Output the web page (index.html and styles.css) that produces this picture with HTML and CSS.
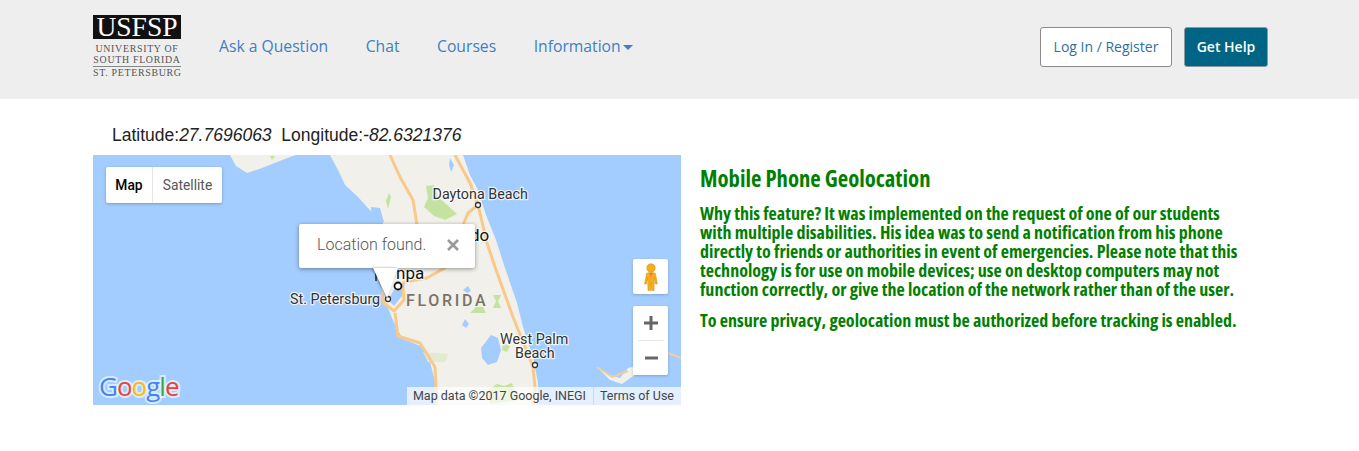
FILE: index.html
```html
<!DOCTYPE html>
<html lang="en">
<head>
  <title>Mobile Phone Geolocation</title>
  <meta charset="utf-8" />
  <link rel="stylesheet" href="styles.css">
</head>
<body>
  <header class="topbar">
    <a class="logo" href="#">
      <span class="logo-mark">USFSP</span>
      <span class="logo-line">UNIVERSITY OF</span>
      <span class="logo-line logo-rule">SOUTH FLORIDA</span>
      <span class="logo-line">ST. PETERSBURG</span>
    </a>
    <nav class="nav">
      <a href="#">Ask a Question</a>
      <a href="#">Chat</a>
      <a href="#">Courses</a>
      <a href="#">Information<span class="caret"></span></a>
    </nav>
    <div class="actions">
      <a class="btn btn-login" href="#">Log In / Register</a>
      <a class="btn btn-help" href="#">Get Help</a>
    </div>
  </header>

  <main class="content">
    <div class="geo-col">
      <div class="coords">Latitude:<em>27.7696063</em>&nbsp; Longitude:<em>-82.6321376</em></div>
      <div class="map">
        <svg class="map-art" viewBox="93 155 588 250" width="588" height="250">
          <!-- land -->
          <path class="land" d="M230 155 L236 166 L247 173 L262 168 L272 164 L290 157 L296 155 Z" />
          <path class="land" d="M330 155 L338 170 L345 185 L358 197 L368 208 L383 223 L384 262 L380 280 L383 297 L387 305 L392 318 L396 327 L403 339 L423 347 L430 362 L436 385 L437 405 L537 405 L538 383 L533 357 L523 327 L517 303 L505 268 L496 240 L486 215 L478 190 L470 175 L463 155 Z" />
          <path class="land" d="M597 367 L610 375 L620 378 L628 368 L636 366 L636 374 L622 384 L610 380 Z" />
          <!-- tampa bay and lakes -->
          <path class="water" d="M388 300 L396 286 L405 283 L402 296 L394 306 Z" />
          <path class="water" d="M371 207 L380 208 L384 222 L372 226 Z" />
          <path class="water" d="M491 335 L498 338 L501 350 L497 362 L488 365 L482 358 L481 348 Z" />
          <path class="water" d="M465 319 L469 324 L466 328 L462 325 Z" />
          <path class="water" d="M463 290 L468 286 L471 291 L467 293 Z" />
          <path class="water" d="M450 158 L454 165 L451 172 L449 165 Z" />
          <path class="water" d="M431 194 L438 199 L434 205 L430 200 Z" />
          <path class="water" d="M505 238 L512 252 L516 268 L508 256 Z" />
          <!-- parks -->
          <path class="park" d="M426 186 L434 185 L438 197 L446 204 L457 214 L445 220 L434 216 L424 207 L428 198 Z" />
          <path class="park" d="M476 307 L483 307 L486 313 L470 313 Z" />
          <path class="park" d="M493 295 L501 295 L498 301 L501 308 L493 308 L496 301 Z" />
          <path class="park" d="M488 390 L497 384 L504 386 L512 383 L518 400 L490 404 Z" />
          <path class="park" d="M503 343 L510 346 L507 352 L502 350 Z" />
          <path class="park-pale" d="M423 352 L448 354 L446 362 L428 362 Z" />
          <path class="park" d="M389 193 L391 197 L388 209 L386 201 Z" />
          <path class="park" d="M275 156 L272 160 L270 156 Z" />
          <!-- roads -->
          <path class="road" d="M390 155 L400 177 L413 200 L417 225 L420 250" />
          <path class="road" d="M455 155 L470 183 L478 205 L487 243 L495 267 L513 317 L533 367 L535 387 L533 405" />
          <path class="road" d="M478 205 L468 213 L463 225 L450 265 L427 278 L405 282 L396 290" />
          <path class="road" d="M403 287 L404 300 L394 311 L384 303 L382 294" />
          <path class="road" d="M395 313 L398 336 L420 343 L435 367 L437 405" />
          <path class="road-thin" d="M597 367 L612 377 L628 371" />
          <path class="road-thin" d="M668 353 L681 358" />
          <!-- city dots -->
          <circle class="city" cx="478" cy="205" r="2.5" />
          <circle class="city city-big" cx="398" cy="286" r="3.5" />
          <circle class="city" cx="388" cy="299" r="2.5" />
          <circle class="city" cx="535" cy="365" r="2.5" />
          <!-- labels -->
          <text class="label" x="432.5" y="199">Daytona Beach</text>
          <text class="label label-big" x="470" y="241">do</text>
          <text class="label label-big" x="396" y="279">npa</text>
          <path class="label-stub" d="M376 269 V281" />
          <text class="label" x="290" y="304">St. Petersburg</text>
          <text class="label-state" x="406" y="306">FLORIDA</text>
          <text class="label" x="500" y="344">West Palm</text>
          <text class="label" x="515" y="358">Beach</text>
          <text class="google" x="99" y="396"><tspan class="g-blue">G</tspan><tspan class="g-red">o</tspan><tspan class="g-yellow">o</tspan><tspan class="g-blue">g</tspan><tspan class="g-green">l</tspan><tspan class="g-red">e</tspan></text>
        </svg>

        <div class="map-type">
          <span class="map-type-on">Map</span>
          <span class="map-type-off">Satellite</span>
        </div>

        <div class="popup">
          <span class="popup-text">Location found.</span>
          <svg class="popup-close" viewBox="0 0 14 14" width="14" height="14"><path d="M2 2 L12 12 M12 2 L2 12" /></svg>
        </div>
        <div class="popup-tail"></div>

        <div class="pegman">
          <svg viewBox="0 0 16 28" width="16" height="28">
            <circle cx="8" cy="5" r="4.2" fill="#f9ad1d" stroke="#d08f16" stroke-width=".6" />
            <path d="M3.6 10.2 Q8 8.6 12.4 10.2 L14.4 21 L12.6 21 L11.4 14.5 L11 27.5 L8.5 27.5 L8 19.5 L7.5 27.5 L5 27.5 L4.6 14.5 L3.4 21 L1.6 21 Z" fill="#f9ad1d" stroke="#d08f16" stroke-width=".5" />
            <path d="M6 10 L8 13.5 L10 10 Z" fill="#ee7f1f" />
          </svg>
        </div>

        <div class="zoom-box">
          <span class="zoom-btn"><svg viewBox="0 0 14 14" width="14" height="14"><path d="M5.5 0 H8.5 V5.5 H14 V8.5 H8.5 V14 H5.5 V8.5 H0 V5.5 H5.5 Z" /></svg></span>
          <span class="zoom-line"></span>
          <span class="zoom-btn"><svg viewBox="0 0 14 14" width="14" height="14"><path d="M1 5.5 H14 V8.5 H1 Z" /></svg></span>
        </div>

        <div class="map-foot">
          <span>Map data ©2017 Google, INEGI</span>
          <span>Terms of Use</span>
        </div>
      </div>
    </div>

    <section class="about">
      <h2 class="about-title">Mobile Phone Geolocation</h2>
      <p>Why this feature? It was implemented on the request of one of our students with multiple disabilities. His idea was to send a notification from his phone directly to friends or authorities in event of emergencies. Please note that this technology is for use on mobile devices; use on desktop computers may not function correctly, or give the location of the network rather than of the user.</p>
      <p>To ensure privacy, geolocation must be authorized before tracking is enabled.</p>
    </section>
  </main>
</body>
</html>
```

FILE: styles.css
```css
body{
  margin: 0;
  background-color: white;
  font-family: "Open Sans", "Liberation Sans", sans-serif;
}
a{
  text-decoration: none;
}

/* top bar */
.topbar{
  display: flex;
  align-items: center;
  height: 99px;
  padding: 0 91px 6px 93px;
  box-sizing: border-box;
  background-color: #eeeeee;
}
.logo{
  display: flex;
  flex-direction: column;
  width: 88px;
  color: #555;
  font-family: "Liberation Serif", serif;
  font-size: 9.9px;
  line-height: 11.5px;
  white-space: nowrap;
}
.logo-mark{
  height: 24px;
  margin-bottom: 4px;
  background-color: #111;
  color: white;
  font-size: 27.5px;
  line-height: 24px;
  text-align: center;
}
.logo-line{
  letter-spacing: .7px;
  text-align: center;
}
.logo-rule{
  border-bottom: 1px solid #888;
}
.nav{
  display: flex;
  gap: 37.5px;
  margin: -2px 0 0 38px;
  font-size: 15.7px;
}
.nav a{
  color: #3f7fc4;
}
.caret{
  display: inline-block;
  margin-left: 2px;
  border-top: 5px solid #3f7fc4;
  border-left: 5px solid transparent;
  border-right: 5px solid transparent;
  vertical-align: 2px;
}
.actions{
  display: flex;
  gap: 12px;
  margin-left: auto;
}
.btn{
  display: block;
  height: 40px;
  box-sizing: border-box;
  border-radius: 3px;
  font-size: 14px;
  line-height: 38px;
  text-align: center;
}
.btn-login{
  width: 132px;
  border: 1px solid #8a8a8a;
  background-color: white;
  color: #2f6f9f;
}
.btn-help{
  width: 84px;
  border: 1px solid #8a9aa0;
  background-color: #006484;
  color: white;
  font-weight: 600;
}

/* main */
.content{
  display: flex;
  padding: 0 93px;
}
.geo-col{
  width: 588px;
  flex: none;
}
.coords{
  height: 56px;
  box-sizing: border-box;
  padding: 26px 0 0 19px;
  color: #222;
  font-family: "Liberation Sans", sans-serif;
  font-size: 17.5px;
  line-height: 20px;
}
.map{
  position: relative;
  width: 588px;
  height: 250px;
  overflow: hidden;
  background-color: #a3ccff;
  font-family: Roboto, sans-serif;
}
.map-art{
  display: block;
}
.land{ fill: #f2f0ea; }
.water{ fill: #a3ccff; }
.park{ fill: #c5e3a0; }
.park-pale{ fill: #e2ebd0; }
.road{
  fill: none;
  stroke: #f9c98a;
  stroke-width: 3;
  stroke-linejoin: round;
}
.road-thin{
  fill: none;
  stroke: #f3cf96;
  stroke-width: 2;
}
.city{
  fill: white;
  stroke: #333;
  stroke-width: 1.3;
}
.city-big{
  stroke: #111;
  stroke-width: 1.8;
}
.label{
  fill: #333;
  font-size: 14.3px;
  paint-order: stroke;
  stroke: rgba(255,255,255,.75);
  stroke-width: 2.5px;
}
.label-big{
  fill: #111;
  font-size: 17px;
}
.label-stub{
  stroke: #222;
  stroke-width: 1.5;
}
.label-state{
  fill: #7a7469;
  font-size: 16px;
  font-weight: 500;
  letter-spacing: 2.7px;
}
.google{
  font-family: "Open Sans", sans-serif;
  font-size: 26px;
  font-weight: 500;
  letter-spacing: -1px;
  paint-order: stroke;
  stroke: rgba(255,255,255,.6);
  stroke-width: 4px;
}
.g-blue{ fill: #4285f4; }
.g-red{ fill: #ea4335; }
.g-yellow{ fill: #fbbc05; }
.g-green{ fill: #34a853; }

/* map controls */
.map-type{
  position: absolute;
  left: 13px;
  top: 12px;
  display: flex;
  height: 36px;
  border-radius: 2px;
  background-color: white;
  box-shadow: 0 1px 3px rgba(0,0,0,.25);
  color: #565656;
  font-size: 13.8px;
  line-height: 36px;
  text-align: center;
}
.map-type-on{
  box-sizing: border-box;
  width: 47px;
  border-right: 1px solid #e6e6e6;
  color: black;
  font-weight: 500;
}
.map-type-off{
  width: 69px;
}
.popup{
  position: absolute;
  left: 206px;
  top: 69px;
  display: flex;
  align-items: center;
  justify-content: space-between;
  width: 176px;
  height: 44px;
  box-sizing: border-box;
  padding: 0 15px 3px 18px;
  border-radius: 2px;
  background-color: white;
  box-shadow: 0 1px 4px rgba(0,0,0,.4);
  color: #555;
  font-size: 16px;
  font-weight: 300;
}
.popup-close path{
  fill: none;
  stroke: #999;
  stroke-width: 2.6;
}
.popup-tail{
  position: absolute;
  left: 280px;
  top: 113px;
  width: 0;
  height: 0;
  border-top: 30px solid white;
  border-left: 14px solid transparent;
  border-right: 11px solid transparent;
  filter: drop-shadow(-1px 0 1px rgba(0,0,0,.45));
}
.pegman{
  position: absolute;
  left: 540px;
  top: 104px;
  display: flex;
  align-items: center;
  justify-content: center;
  width: 35px;
  height: 35px;
  border-radius: 2px;
  background-color: white;
  box-shadow: 0 1px 3px rgba(0,0,0,.2);
}
.zoom-box{
  position: absolute;
  left: 540px;
  top: 151px;
  display: flex;
  flex-direction: column;
  align-items: center;
  width: 35px;
  height: 69px;
  border-radius: 2px;
  background-color: white;
  box-shadow: 0 1px 3px rgba(0,0,0,.2);
}
.zoom-btn{
  display: flex;
  align-items: center;
  justify-content: center;
  height: 34px;
}
.zoom-btn path{
  fill: #666;
}
.zoom-line{
  width: 25px;
  height: 1px;
  background-color: #e6e6e6;
}
.map-foot{
  position: absolute;
  right: 0;
  bottom: 0;
  display: flex;
  height: 18px;
  background-color: rgba(255,255,255,.7);
  color: #444;
  font-size: 12.5px;
  line-height: 18px;
}
.map-foot span{
  padding: 0 7px 0 6px;
}
.map-foot span:last-child{
  border-left: 1px solid #c8dcf4;
}

/* text */
.about{
  width: 545px;
  margin: 66px 0 0 19px;
  color: #008000;
  font-stretch: 75%;
  font-weight: 700;
  font-size: 18px;
  line-height: 19px;
}
.about-title{
  margin: 0 0 11px;
  font-size: 22.7px;
  line-height: 28px;
}
.about p{
  margin: 0 0 12px;
}
```
